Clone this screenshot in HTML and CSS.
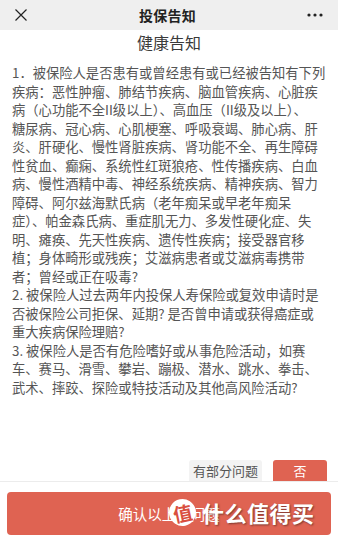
FILE: index.html
```html
<!DOCTYPE html>
<html lang="zh-CN">
<head>
<meta charset="utf-8">
<title>投保告知</title>
<link rel="stylesheet" href="styles.css">
</head>
<body>
<div class="page">
  <header class="topbar">
    <svg class="close" width="14" height="14" viewBox="0 0 14 14"><path d="M1.5 1.5 L12.5 12.5 M12.5 1.5 L1.5 12.5" stroke="#222" stroke-width="1.2" fill="none"/></svg>
    <div class="topbar-title">投保告知</div>
    <svg class="more" width="16" height="4" viewBox="0 0 16 4"><circle cx="2" cy="2" r="1.6" fill="#222"/><circle cx="8" cy="2" r="1.6" fill="#222"/><circle cx="14" cy="2" r="1.6" fill="#222"/></svg>
  </header>
  <h1 class="title">健康告知</h1>
  <div class="content">
    <p class="text">1．被保险人是否患有或曾经患有或已经被告知有下列<br>疾病：恶性肿瘤、肺结节疾病、脑血管疾病、心脏疾<br>病（心功能不全II级以上）、高血压（II级及以上）、<br>糖尿病、冠心病、心肌梗塞、呼吸衰竭、肺心病、肝<br>炎、肝硬化、慢性肾脏疾病、肾功能不全、再生障碍<br>性贫血、癫痫、系统性红斑狼疮、性传播疾病、白血<br>病、慢性酒精中毒、神经系统疾病、精神疾病、智力<br>障碍、阿尔兹海默氏病（老年痴呆或早老年痴呆<br>症）、帕金森氏病、重症肌无力、多发性硬化症、失<br>明、瘫痪、先天性疾病、遗传性疾病；接受器官移<br>植；身体畸形或残疾；艾滋病患者或艾滋病毒携带<br>者；曾经或正在吸毒?<br>2. 被保险人过去两年内投保人寿保险或复效申请时是<br>否被保险公司拒保、延期? 是否曾申请或获得癌症或<br>重大疾病保险理赔?<br>3. 被保险人是否有危险嗜好或从事危险活动，如赛<br>车、赛马、滑雪、攀岩、蹦极、潜水、跳水、拳击、<br>武术、摔跤、探险或特技活动及其他高风险活动?</p>
  </div>
  <div class="choices">
    <button class="choice choice-partial">有部分问题</button>
    <button class="choice choice-no">否</button>
  </div>
  <footer class="bottombar">
    <button class="confirm">确认以上无问题</button>
  </footer>
  <div class="watermark">
    <span class="wm-badge">值</span>
    <span class="wm-text">什么值得买</span>
  </div>
</div>
</body>
</html>
```

FILE: styles.css
```css
* { box-sizing: border-box; }
html, body { margin: 0; padding: 0; }
body {
  width: 338px;
  height: 538px;
  overflow: hidden;
  background: #fff;
  font-family: "Noto Sans CJK SC", "Noto Sans", sans-serif;
  color: #555;
}
.page {
  position: relative;
  display: flex;
  flex-direction: column;
  height: 538px;
}
.topbar {
  height: 30px;
  background: #efefef;
  display: flex;
  align-items: center;
  justify-content: space-between;
  padding: 0 15px 0 14px;
  flex-shrink: 0;
}
.close { display: block; }
.more { display: block; }
.topbar-title {
  font-size: 14px;
  font-weight: 700;
  color: #222;
  letter-spacing: 0.3px;
}
.title {
  margin: 0;
  font-size: 16px;
  font-weight: 400;
  line-height: 24px;
  text-align: center;
  color: #3a3a3a;
}
.content {
  flex: 1;
  padding: 10px 0 0 12px;
}
.text {
  margin: 0;
  font-size: 13.3px;
  line-height: 18.5px;
  white-space: nowrap;
  color: #555;
}
.choices {
  display: flex;
  justify-content: flex-end;
  gap: 11px;
  padding-right: 11px;
  height: 21px;
  flex-shrink: 0;
}
.choice {
  border: 0;
  margin: 0;
  font-family: inherit;
  font-size: 13px;
  line-height: 21px;
  height: 21px;
  padding: 0;
  border-radius: 3px 3px 0 0;
}
.choice-partial {
  width: 73px;
  background: #f3f3f3;
  color: #555;
}
.choice-no {
  width: 54px;
  background: #df6352;
  color: #fff;
}
.bottombar {
  border-top: 1px solid #ececec;
  height: 57px;
  padding: 10px 7px 0;
  flex-shrink: 0;
}
.confirm {
  display: block;
  width: 100%;
  height: 43px;
  border: 0;
  border-radius: 4px;
  background: #df6352;
  color: #fff;
  font-family: inherit;
  font-size: 14.5px;
  padding: 0;
}
.watermark {
  position: absolute;
  left: 169px;
  top: 496px;
  display: flex;
  align-items: center;
  gap: 6px;
  pointer-events: none;
}
.wm-badge {
  width: 27px;
  height: 27px;
  border-radius: 50%;
  background: #fff;
  color: #d94f3f;
  font-size: 19px;
  font-weight: 700;
  line-height: 27px;
  text-align: center;
  transform: rotate(-12deg);
}
.wm-text {
  font-size: 22px;
  font-weight: 700;
  color: #fff;
  letter-spacing: 0.5px;
  text-shadow: 1px 1px 2px rgba(0,0,0,0.45);
}
```
